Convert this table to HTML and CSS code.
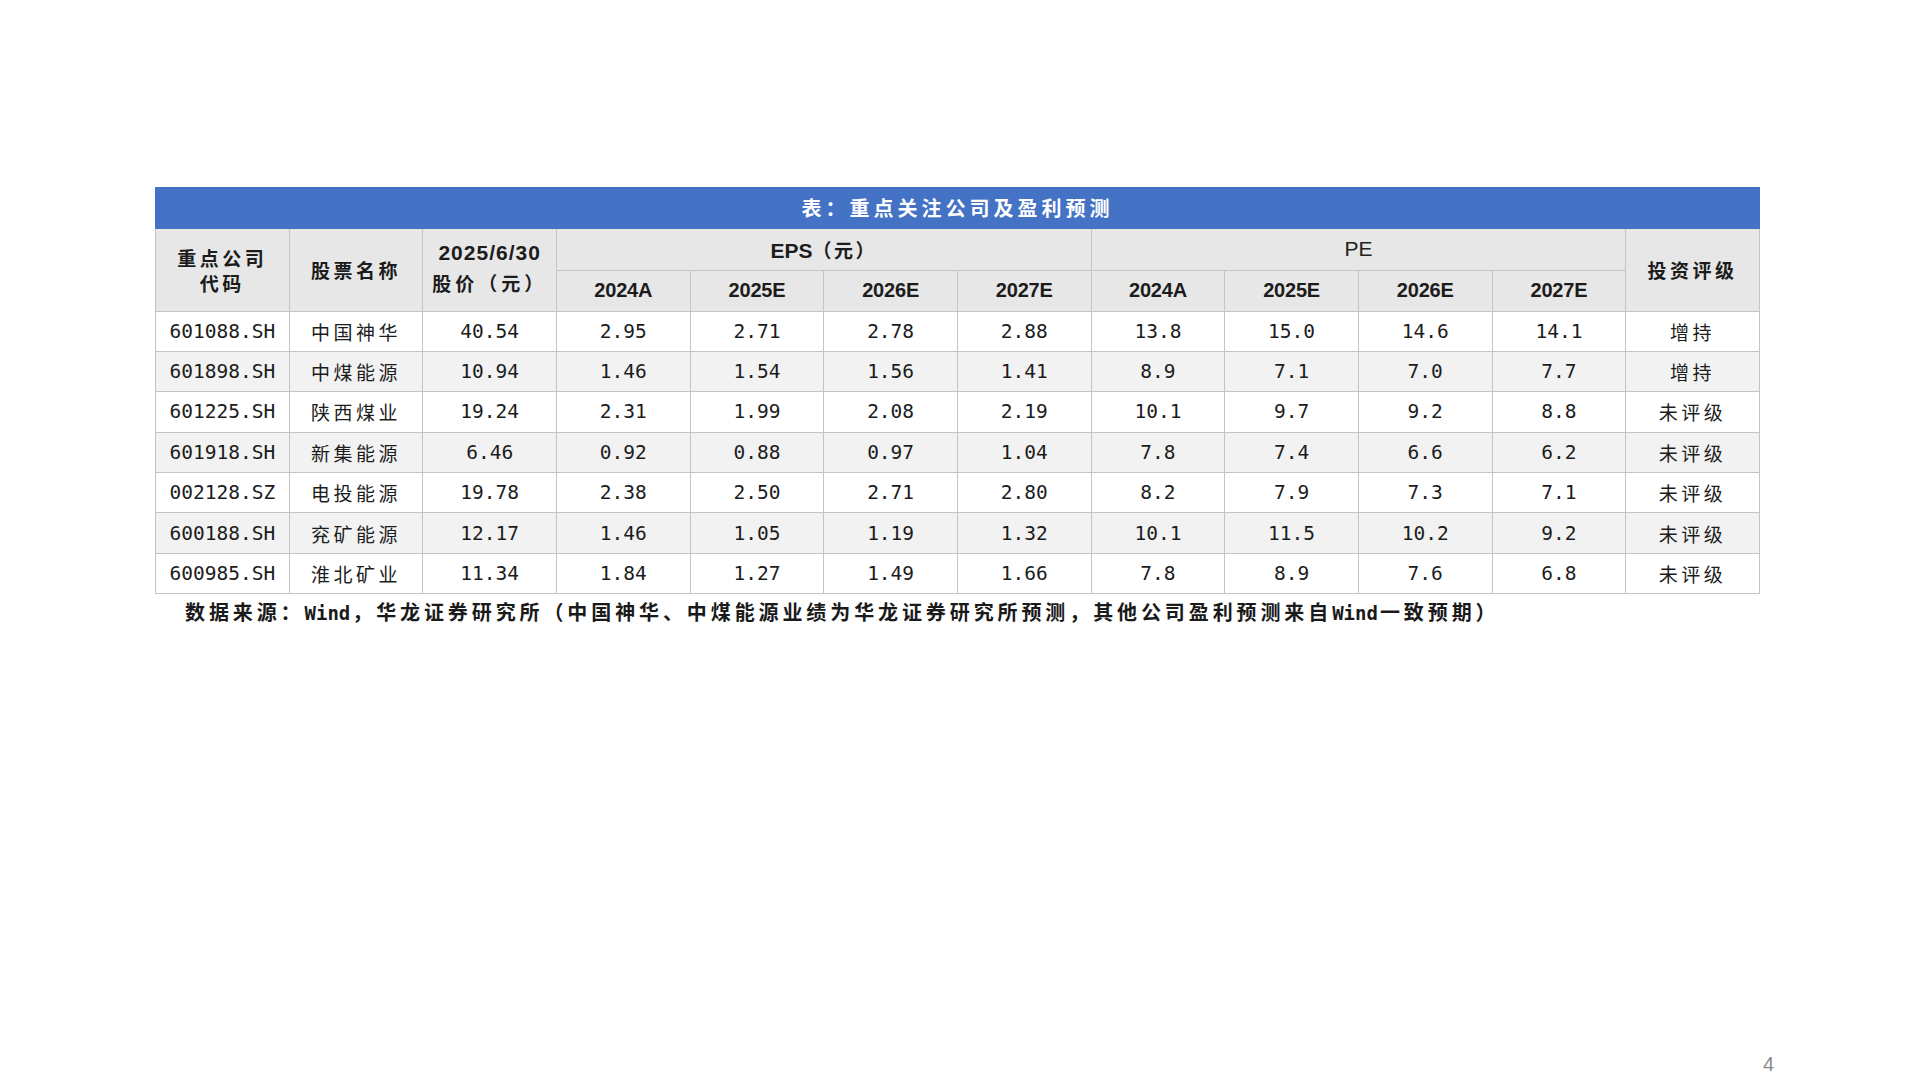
FILE: index.html
```html
<!DOCTYPE html>
<html lang="zh-CN">
<head>
<meta charset="utf-8">
<title>重点关注公司及盈利预测</title>
<link rel="stylesheet" href="styles.css">
</head>
<body>
<div class="page">
  <main class="content">
    <div class="title">表：重点关注公司及盈利预测</div>
    <table class="grid">
      <colgroup>
        <col><col><col><col><col><col><col><col><col><col><col><col>
      </colgroup>
      <thead>
        <tr class="h1">
          <th rowspan="2" class="cn2">重点公司<br>代码</th>
          <th rowspan="2" class="cn">股票名称</th>
          <th rowspan="2" class="price"><span class="lat date">2025/6/30</span><br><span class="cnb wide">股价（元）</span></th>
          <th colspan="4" class="group"><span class="lat">EPS</span><span class="cnb">（元）</span></th>
          <th colspan="4" class="group pe">PE</th>
          <th rowspan="2" class="cn">投资评级</th>
        </tr>
        <tr class="h2">
          <th class="yr">2024A</th><th class="yr">2025E</th><th class="yr">2026E</th><th class="yr">2027E</th>
          <th class="yr">2024A</th><th class="yr">2025E</th><th class="yr">2026E</th><th class="yr">2027E</th>
        </tr>
      </thead>
      <tbody>
        <tr><td class="num">601088.SH</td><td class="cn">中国神华</td><td class="num">40.54</td><td class="num">2.95</td><td class="num">2.71</td><td class="num">2.78</td><td class="num">2.88</td><td class="num">13.8</td><td class="num">15.0</td><td class="num">14.6</td><td class="num">14.1</td><td class="cn">增持</td></tr>
        <tr><td class="num">601898.SH</td><td class="cn">中煤能源</td><td class="num">10.94</td><td class="num">1.46</td><td class="num">1.54</td><td class="num">1.56</td><td class="num">1.41</td><td class="num">8.9</td><td class="num">7.1</td><td class="num">7.0</td><td class="num">7.7</td><td class="cn">增持</td></tr>
        <tr><td class="num">601225.SH</td><td class="cn">陕西煤业</td><td class="num">19.24</td><td class="num">2.31</td><td class="num">1.99</td><td class="num">2.08</td><td class="num">2.19</td><td class="num">10.1</td><td class="num">9.7</td><td class="num">9.2</td><td class="num">8.8</td><td class="cn">未评级</td></tr>
        <tr><td class="num">601918.SH</td><td class="cn">新集能源</td><td class="num">6.46</td><td class="num">0.92</td><td class="num">0.88</td><td class="num">0.97</td><td class="num">1.04</td><td class="num">7.8</td><td class="num">7.4</td><td class="num">6.6</td><td class="num">6.2</td><td class="cn">未评级</td></tr>
        <tr><td class="num">002128.SZ</td><td class="cn">电投能源</td><td class="num">19.78</td><td class="num">2.38</td><td class="num">2.50</td><td class="num">2.71</td><td class="num">2.80</td><td class="num">8.2</td><td class="num">7.9</td><td class="num">7.3</td><td class="num">7.1</td><td class="cn">未评级</td></tr>
        <tr><td class="num">600188.SH</td><td class="cn">兖矿能源</td><td class="num">12.17</td><td class="num">1.46</td><td class="num">1.05</td><td class="num">1.19</td><td class="num">1.32</td><td class="num">10.1</td><td class="num">11.5</td><td class="num">10.2</td><td class="num">9.2</td><td class="cn">未评级</td></tr>
        <tr><td class="num">600985.SH</td><td class="cn">淮北矿业</td><td class="num">11.34</td><td class="num">1.84</td><td class="num">1.27</td><td class="num">1.49</td><td class="num">1.66</td><td class="num">7.8</td><td class="num">8.9</td><td class="num">7.6</td><td class="num">6.8</td><td class="cn">未评级</td></tr>
      </tbody>
    </table>
    <p class="note">数据来源：<span class="wl">Wind</span>，华龙证券研究所（中国神华、中煤能源业绩为华龙证券研究所预测，其他公司盈利预测来自<span class="wl">Wind</span>一致预期）</p>
  </main>
  <footer class="pageno">4</footer>
</div>
</body>
</html>
```

FILE: styles.css
```css
html, body {
  margin: 0;
  padding: 0;
  background: #ffffff;
}

.page {
  width: 1920px;
  height: 1080px;
  display: flex;
  flex-direction: column;
  box-sizing: border-box;
}

.content {
  padding-top: 187px;
  padding-left: 155px;
  width: 1605px;
}

.title {
  height: 42px;
  line-height: 42px;
  background: #4472c4;
  color: #ffffff;
  text-align: center;
  font-family: "Noto Sans CJK SC", sans-serif;
  font-weight: 700;
  font-size: 20px;
  letter-spacing: 4px;
}

.grid {
  width: 1605px;
  border-collapse: collapse;
  table-layout: fixed;
  color: #1c1c1c;
}

.grid th,
.grid td {
  border: 1px solid #c4c4c4;
  padding: 0;
  text-align: center;
  vertical-align: middle;
  overflow: hidden;
  white-space: nowrap;
}

.grid thead th {
  background: #e7e7e7;
}

.grid thead tr:first-child th {
  border-top: none;
}

.h1 {
  height: 41px;
}

.h2 {
  height: 41px;
}

.grid tbody tr {
  height: 40.4px;
}

.grid tbody tr:nth-child(even) td {
  background: #f2f2f2;
}

.cn,
.cn2 {
  font-family: "Noto Sans CJK SC", sans-serif;
  font-size: 19px;
  letter-spacing: 3.5px;
  font-weight: 400;
}

th.cn,
th.cn2 {
  font-weight: 700;
}

.cn2 {
  line-height: 25px;
}

.price {
  line-height: 28px;
}

.lat {
  font-family: "Liberation Sans", sans-serif;
  font-weight: 700;
  font-size: 21px;
}

.date {
  letter-spacing: 1px;
}

.cnb {
  font-family: "Noto Sans CJK SC", sans-serif;
  font-weight: 700;
  font-size: 19px;
  letter-spacing: 2.5px;
}

.cnb.wide {
  letter-spacing: 4px;
}

.group {
  font-family: "Liberation Sans", "Noto Sans CJK SC", sans-serif;
}

.pe {
  font-weight: 400;
  font-size: 21px;
  color: #222222;
}

.yr {
  font-family: "Liberation Sans", sans-serif;
  font-weight: 700;
  font-size: 20px;
  letter-spacing: -0.2px;
}

.num {
  font-family: "DejaVu Sans Mono", "Noto Sans CJK SC", monospace;
  font-size: 19.5px;
  font-weight: 400;
}

.note {
  margin: 0;
  padding: 3px 0 0 30px;
  font-family: "Noto Sans CJK SC", sans-serif;
  font-weight: 700;
  font-size: 20px;
  line-height: 30px;
  letter-spacing: 3.9px;
  color: #1a1a1a;
  white-space: nowrap;
}

.wl {
  font-family: "DejaVu Sans Mono", monospace;
  letter-spacing: 0;
  font-size: 19px;
  padding-right: 2px;
}

.pageno {
  margin-top: auto;
  padding: 0 146px 4px 0;
  text-align: right;
  font-family: "Liberation Sans", sans-serif;
  font-size: 20px;
  line-height: 24px;
  color: #8a8a8a;
}
```
